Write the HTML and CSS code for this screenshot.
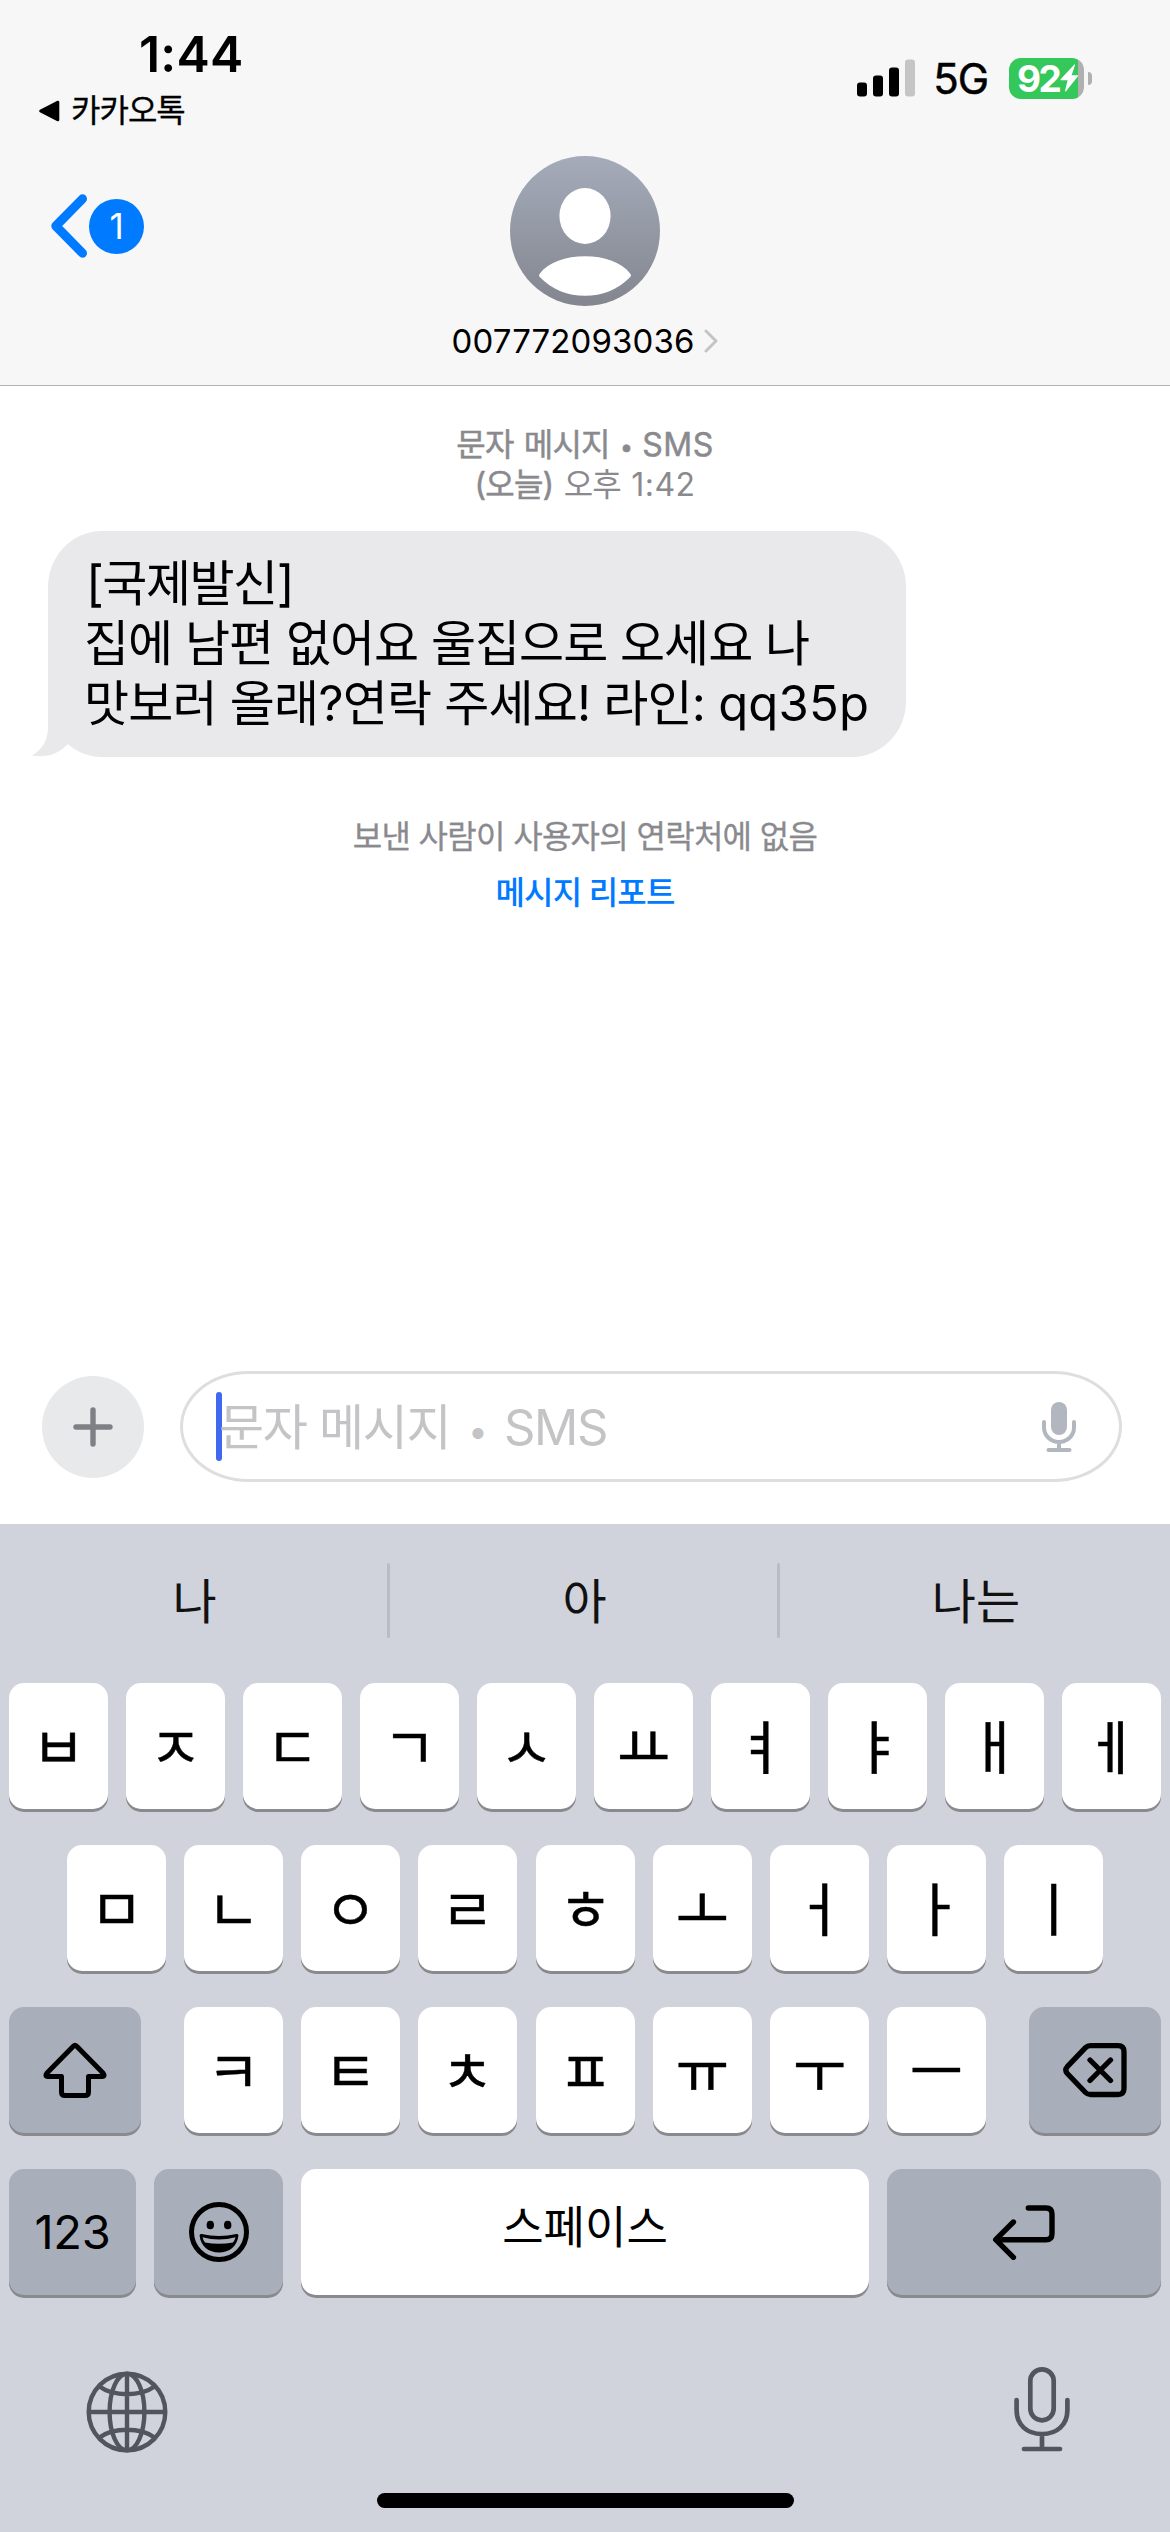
FILE: index.html
```html
<!DOCTYPE html>
<html lang="ko">
<head>
<meta charset="utf-8">
<title>메시지</title>
<link rel="stylesheet" href="styles.css">
</head>
<body>
<div class="phone">
  <header class="header">
    <div class="status">
      <div class="status-left">
        <div class="time">1:44</div>
        <div class="return-app">
          <svg width="22" height="22" viewBox="0 0 22 22"><path d="M2.5 11 20 2v18z" stroke="#000" stroke-width="2.6" stroke-linejoin="round"/></svg>
          <span>카카오톡</span>
        </div>
      </div>
      <div class="status-right">
        <svg class="signal" width="58" height="38" viewBox="0 0 58 38">
          <rect x="0" y="23.500" width="10" height="14" rx="3"/>
          <rect x="16" y="16.500" width="10" height="21" rx="3"/>
          <rect x="32" y="8.500" width="10" height="29" rx="3"/>
          <rect x="48" y=".5" width="10" height="37" rx="3" fill="#c5c5c5"/>
        </svg>
        <span class="network">5G</span>
        <div class="battery">
          <span class="level">92</span>
          <svg width="19" height="28" viewBox="0 0 19 28"><path d="M14.300.4.6 15.300q-.6 1 .5 1H7.600L5 26.800q0 1.200 1 .4L18 12.200q.5-1-.6-1H11.600L15 1.200Q15.200-.2 14.300.4z" fill="#fff"/></svg>
        </div>
        <span class="battery-nub"></span>
      </div>
    </div>
    <div class="nav">
      <div class="back">
        <svg width="38" height="64" viewBox="0 0 38 64"><path d="M32.500 4.800 5.800 32 32.500 59.200" fill="none" stroke="#007aff" stroke-width="9" stroke-linecap="round" stroke-linejoin="round"/></svg>
        <span class="unread">1</span>
      </div>
      <div class="contact">
        <svg width="150" height="150" viewBox="0 0 150 150">
          <defs><linearGradient id="avatar" x1="0" y1="0" x2="0" y2="1"><stop offset="0" stop-color="#a5abba"/><stop offset="1" stop-color="#83868f"/></linearGradient></defs>
          <circle cx="75" cy="75" r="75" fill="url(#avatar)"/>
          <ellipse cx="75" cy="60" rx="25.600" ry="28" fill="#fff"/>
          <path d="M29.500 118C38 106 56 100.200 75 100.200S112 106 120.500 118q1 1.400 0 2.800C108 134 92 139.800 75 139.800S42 134 29.500 120.800q-1-1.400 0-2.800z" fill="#fff"/>
        </svg>
        <div class="contact-name">
          <span>007772093036</span>
          <svg width="14" height="24" viewBox="0 0 14 24"><path d="M2 2l10 10L2 22" fill="none" stroke="#c4c4c6" stroke-width="3" stroke-linecap="round" stroke-linejoin="round"/></svg>
        </div>
      </div>
      <div></div>
    </div>
  </header>

  <main class="thread">
    <div class="stamp"><p class="stamp-kind">문자 메시지 <span class="dot">•</span> <span class="latin">SMS</span></p><p class="stamp-time"><b>(오늘)</b> 오후 <span class="latin">1:42</span></p></div>
    <div class="bubble">
      <p class="origin">[국제발신]</p>
      <p>집에 남편 없어요 울집으로 오세요 나</p>
      <p class="contact-line">맛보러 올래?연락 주세요! 라인: <span class="handle">qq35p</span></p>
      <svg class="tail" width="38" height="60" viewBox="0 0 38 60"><path d="M16 0V30C16 44 10 52.500 0 58.500 12 61 26 58 35.500 47.300L38 40z" fill="#e9e9eb"/></svg>
    </div>
    <p class="notice">보낸 사람이 사용자의 연락처에 없음</p>
    <p class="report">메시지 리포트</p>
  </main>

  <section class="compose">
    <div class="add"><svg width="40" height="40" viewBox="0 0 40 40"><path d="M20 3v34M3 20h34" stroke="#7e8085" stroke-width="5.400" stroke-linecap="round"/></svg></div>
    <div class="field">
      <span class="caret"></span>
      <span class="placeholder">문자 메시지 <span class="dot">•</span> SMS</span>
      <svg width="36" height="52" viewBox="0 0 36 52" fill="none" stroke="#b2b7bf" stroke-width="4" stroke-linecap="round"><rect x="10" y="1" width="16" height="33" rx="8" fill="#b2b7bf" stroke="none"/><path d="M3 21v5.500a15 14.500 0 0 0 30 0V21M18 41v8M7.500 49h21"/></svg>
    </div>
  </section>

  <section class="keyboard">
    <div class="suggestions"><span>나</span><i></i><span>아</span><i></i><span>나는</span></div>
    <div class="row">
      <span class="key">ㅂ</span><span class="key">ㅈ</span><span class="key">ㄷ</span><span class="key">ㄱ</span><span class="key">ㅅ</span><span class="key">ㅛ</span><span class="key">ㅕ</span><span class="key">ㅑ</span><span class="key">ㅐ</span><span class="key">ㅔ</span>
    </div>
    <div class="row row-home">
      <span class="key">ㅁ</span><span class="key">ㄴ</span><span class="key">ㅇ</span><span class="key">ㄹ</span><span class="key">ㅎ</span><span class="key">ㅗ</span><span class="key">ㅓ</span><span class="key">ㅏ</span><span class="key">ㅣ</span>
    </div>
    <div class="row row-shift">
      <span class="key dark shift"><svg width="64" height="56" viewBox="0 0 64 56"><path d="M30.300 4.200 4 31q-2.500 3.300 1 3.500H18.500V50q0 3.500 3.500 3.500H42q3.500 0 3.500-3.500V34.500H59q3.500-.2 1-3.500L33.700 4.200q-1.700-1.600-3.400 0z" fill="none" stroke="#000" stroke-width="5" stroke-linejoin="round"/></svg></span>
      <span class="key">ㅋ</span><span class="key">ㅌ</span><span class="key">ㅊ</span><span class="key">ㅍ</span><span class="key">ㅠ</span><span class="key">ㅜ</span><span class="key">ㅡ</span>
      <span class="key dark delete"><svg width="66" height="56" viewBox="0 0 66 56" fill="none" stroke="#000" stroke-width="5.300" stroke-linecap="round" stroke-linejoin="round"><path d="M28.500 3.700H56q6 0 6 6V46.500q0 6-6 6H28.500q-3 0-5-2L5.300 31.500q-3-3.400 0-6.800L23.500 5.700q2-2 5-2z"/><path d="M28 18 48.500 38.500M48.500 18 28 38.500"/></svg></span>
    </div>
    <div class="row row-space">
      <span class="key dark numbers">123</span>
      <span class="key dark emoji"><svg width="62" height="62" viewBox="0 0 62 62"><circle cx="31" cy="31" r="27.500" fill="none" stroke="#000" stroke-width="5"/><ellipse cx="22.300" cy="24" rx="3.700" ry="4.300"/><ellipse cx="39.700" cy="24" rx="3.700" ry="4.300"/><path d="M11.600 34.500q0-2 2-1.500 17.400 3.800 34.800 0 2-.5 2 1.500C49.500 45 41.500 51.500 31 51.500S12.500 45 11.600 34.500z"/><path d="M14.500 36.200Q31 40.600 47.500 36.200q-.7 3-2.500 5.200Q31 44.300 17 41.400 15.200 39.200 14.500 36.200z" fill="#a9aebb"/></svg></span>
      <span class="key space">스페이스</span>
      <span class="key dark enter"><svg width="64" height="56" viewBox="0 0 64 56" fill="none" stroke="#000" stroke-width="5.400" stroke-linecap="round" stroke-linejoin="round"><path d="M36.300 4H54q6 0 6 6V29.700q0 6-6 6H4M21.400 18 3.700 35.700 21.400 53.300"/></svg></span>
    </div>
    <div class="tools">
      <svg class="globe" width="82" height="82" viewBox="0 0 82 82" fill="none" stroke="#50555f" stroke-width="4.400"><circle cx="41" cy="41" r="38.300"/><ellipse cx="41" cy="41" rx="17.400" ry="38.300"/><path d="M41 2.700v76.600M2.700 41h76.600M13.500 15.500Q24 23.200 41 23.200T68.500 15.500M13.500 66.500Q24 58.800 41 58.800T68.500 66.500"/></svg>
      <svg width="56" height="86" viewBox="0 0 56 86" fill="none" stroke="#50555f" stroke-width="4.700" stroke-linecap="round"><rect x="16.300" y="3.300" width="23.400" height="51" rx="11.700"/><path d="M2.600 34v10C2.600 59 13 68 28 68S53.400 59 53.400 44V34M28 68v15M10 83h36"/></svg>
    </div>
    <div class="home-bar"></div>
  </section>
</div>
</body>
</html>
```
FILE: styles.css
```css
* { box-sizing: border-box; }
body { margin: 0; background: #fff; font-family: "Inter", "Noto Sans CJK KR", sans-serif; color: #000; }
p { margin: 0; }
svg { display: block; flex: none; }
.phone { width: 1170px; height: 2532px; display: flex; flex-direction: column; overflow: hidden; white-space: nowrap; }

.header { height: 386px; background: #f7f7f7; border-bottom: 1px solid #b2b2b2; }
.status { height: 156px; display: flex; justify-content: space-between; }
.status-left { padding: 24px 0 0 38px; }
.time { height: 60px; line-height: 60px; padding-left: 101px; font-size: 50px; font-weight: 600; letter-spacing: 0.2px; }
.return-app { display: flex; align-items: center; gap: 11px; height: 54px; font-size: 32px; letter-spacing: -1px; -webkit-text-stroke: 0.3px #000; }
.return-app span { line-height: 54px; height: 54px; }
.status-right { display: flex; align-items: center; height: 42px; margin-top: 57px; padding-right: 78px; }
.network { font-size: 42px; line-height: 42px; margin: 1px 21px 0 18px; letter-spacing: -1px; -webkit-text-stroke: 0.5px #000; }
.battery { width: 75px; height: 41px; border-radius: 12px; padding-left: 8px; display: flex; align-items: center; background: linear-gradient(to right, #34c759 69px, #b0b0b0 69px); }
.level { width: 43px; font-size: 37px; line-height: 41px; font-weight: 700; color: #fff; letter-spacing: -2.500px; }
.battery-nub { width: 4px; height: 13px; margin-left: 4px; border-radius: 0 4px 4px 0; background: #b0b0b0; }

.nav { display: grid; grid-template-columns: 1fr auto 1fr; }
.back { display: flex; align-items: center; gap: 1px; height: 64px; margin-top: 38px; padding-left: 50px; }
.unread { width: 55px; height: 55px; border-radius: 50%; background: #007aff; color: #fff; font-size: 35px; line-height: 55px; text-align: center; }
.contact { display: flex; flex-direction: column; align-items: center; }
.contact-name { display: flex; align-items: center; gap: 10px; height: 40px; margin-top: 15px; font-size: 33px; line-height: 40px; letter-spacing: 0.1px; }

.thread { height: 985px; padding-top: 39px; }
.stamp { text-align: center; font-size: 32px; line-height: 40px; letter-spacing: -0.8px; color: #8a8a8e; }
.stamp p { height: 40px; }
.stamp-kind, .stamp b { font-weight: 400; -webkit-text-stroke: 0.5px #8a8a8e; }
.stamp-kind { word-spacing: 2px; }
.stamp-time { word-spacing: 2px; }
.stamp .latin { letter-spacing: 0.5px; }
.dot { font-size: 0.72em; line-height: 0; vertical-align: 0.04em; }
.bubble { position: relative; width: 858px; height: 226px; margin: 26px 0 0 48px; padding: 23px 0 0 36px; border-radius: 54px / 56px; background: #e9e9eb; font-size: 49px; line-height: 60px; letter-spacing: -1px; }
.origin { padding-left: 2px; letter-spacing: -1.500px; }
.contact-line { letter-spacing: -0.800px; }
.handle { letter-spacing: 0.2px; }
.tail { position: absolute; left: -16px; bottom: 0; }
.notice { margin-top: 60px; text-align: center; font-size: 32px; line-height: 40px; letter-spacing: -0.7px; color: #8a8a8e; -webkit-text-stroke: 0.3px #8a8a8e; }
.report { margin-top: 16px; text-align: center; font-size: 32px; line-height: 40px; letter-spacing: -0.9px; font-weight: 500; color: #007aff; }

.compose { display: flex; height: 153px; padding-left: 42px; }
.add { width: 102px; height: 102px; margin-top: 5px; border-radius: 50%; background: #e8e9eb; display: grid; place-items: center; }
.field { width: 942px; height: 111px; margin-left: 36px; padding: 0 42px 0 33px; border: 3px solid #dedee0; border-radius: 68px / 55.500px; display: flex; align-items: center; }
.caret { width: 6px; height: 69px; border-radius: 3px; background: #4169ef; }
.placeholder { flex: 1; height: 69px; margin: 2px 0 0 -3px; font-size: 49px; line-height: 69px; letter-spacing: -1.300px; color: #c4c4c6; }
.placeholder .dot { margin: 0 5px; }

.keyboard { height: 1008px; background: #d0d3db; }
.suggestions { height: 153px; display: grid; grid-template-columns: 387px 3px 387px 3px 390px; padding-top: 39px; }
.suggestions span { height: 75px; padding-left: 2px; line-height: 77px; text-align: center; font-size: 48px; color: #111; }
.suggestions i { height: 75px; border-radius: 2px; background: #b9bcc1; }
.row { display: flex; gap: 18px; height: 126px; margin: 6px 9px 36px; }
.row + .row { margin-top: 0; }
.row .key { display: flex; align-items: center; justify-content: center; flex: none; width: 99px; height: 126px; padding-top: 3px; border-radius: 15px; background: #fff; box-shadow: 0 3px #898a8d; font-size: 58px; line-height: 120px; -webkit-text-stroke: 0.4px #000; }
.row .dark { padding-top: 0; background: #a9aebb; }
.row-home { margin-left: 67px; }
.row-home .key:nth-child(5) { margin-left: 1px; }
.row-shift .shift { width: 132px; margin-right: 25px; }
.row-shift .key:nth-child(5) { margin-left: 1px; }
.row-shift .delete { width: 132px; margin-left: 25px; }
.row .numbers { width: 127px; font-size: 47px; letter-spacing: -0.3px; -webkit-text-stroke: 0; }
.row .emoji { width: 129px; }
.row .space { width: 568px; padding: 0 0 8px; font-size: 45px; line-height: 116px; -webkit-text-stroke: 0; }
.row .enter { width: 274px; }
.tools { display: flex; justify-content: space-between; align-items: flex-end; height: 86px; margin: 71px 100px 0 86px; }
.globe { margin-bottom: -1px; }
.home-bar { width: 417px; height: 15px; margin: 41px auto 0; border-radius: 8px; background: #000; }
```
